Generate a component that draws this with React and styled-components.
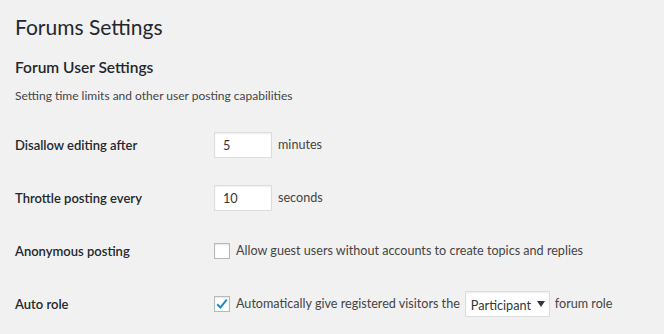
import React from "react";
import styled, { createGlobalStyle } from "styled-components";

const Global = createGlobalStyle`
  html, body { margin: 0; padding: 0; background: #f1f1f1; }
  body { font-family: Lato, "Open Sans", sans-serif; color: #444; font-size: 13px; }
`;

const Wrap = styled.div`
  padding: 12px 15px 0 15px;
`;

const Title = styled.h1`
  margin: 0;
  font-size: 21px;
  line-height: 29px;
  font-weight: 400;
  color: #23282d;
`;

const Section = styled.h2`
  margin: 16px 0 0;
  font-size: 15.5px;
  line-height: 20px;
  font-weight: 600;
  color: #23282d;
`;

const Desc = styled.p`
  margin: 10px 0 0;
  font-size: 12px;
  line-height: 18px;
  color: #444;
`;

const Table = styled.div`
  display: grid;
  grid-template-columns: 199px 1fr;
  grid-auto-rows: 53px;
  margin-top: 13px;
`;

const Label = styled.div`
  display: flex;
  align-items: center;
  font-weight: 600;
  font-size: 13px;
  color: #23282d;
`;

const Field = styled.div`
  display: flex;
  align-items: center;
  gap: 6px;
  font-size: 12.6px;
  color: #444;
`;

const NumInput = styled.input`
  box-sizing: border-box;
  width: 58px;
  height: 26px;
  padding: 3px 8px;
  border: 1px solid #ddd;
  box-shadow: inset 0 1px 2px rgba(0, 0, 0, 0.07);
  background: #fff;
  font-family: inherit;
  font-size: 12.7px;
  color: #32373c;
  outline: none;
`;

const Box = styled.span`
  box-sizing: border-box;
  width: 16px;
  height: 16px;
  border: 1px solid #b4b9be;
  background: #fff;
  box-shadow: inset 0 1px 2px rgba(0, 0, 0, 0.1);
  display: inline-flex;
  align-items: center;
  justify-content: center;
  flex: none;
`;

const SelectWrap = styled.span`
  position: relative;
  display: inline-flex;
  margin: 0 -1px 0 -1px;
`;

const Select = styled.select`
  box-sizing: border-box;
  appearance: none;
  -webkit-appearance: none;
  width: 85px;
  height: 26px;
  padding: 2px 12px 0 5px;
  border: 1px solid #ddd;
  box-shadow: inset 0 1px 2px rgba(0, 0, 0, 0.07);
  background: #fff;
  font-family: inherit;
  font-size: 12.7px;
  color: #32373c;
  border-radius: 0;
  outline: none;
`;

const Arrow = styled.svg`
  position: absolute;
  right: 5px;
  top: 10px;
  pointer-events: none;
`;

function Check({ checked }) {
  return (
    <Box>
      {checked && (
        <svg width="14" height="14" viewBox="0 0 14 14">
          <path d="M2.2 7.2 L5.4 10.4 L11.8 2.6" fill="none" stroke="#1e8cbe" strokeWidth="2" />
        </svg>
      )}
    </Box>
  );
}

export default function App() {
  return (
    <>
      <Global />
      <Wrap>
        <Title>Forums Settings</Title>
        <Section>Forum User Settings</Section>
        <Desc>Setting time limits and other user posting capabilities</Desc>
        <Table>
          <Label>Disallow editing after</Label>
          <Field>
            <NumInput defaultValue="5" />
            <span>minutes</span>
          </Field>
          <Label>Throttle posting every</Label>
          <Field>
            <NumInput defaultValue="10" />
            <span>seconds</span>
          </Field>
          <Label>Anonymous posting</Label>
          <Field>
            <Check />
            <span>Allow guest users without accounts to create topics and replies</span>
          </Field>
          <Label>Auto role</Label>
          <Field>
            <Check checked />
            <span>Automatically give registered visitors the</span>
            <SelectWrap>
              <Select defaultValue="participant">
                <option value="participant">Participant</option>
              </Select>
              <Arrow width="8" height="6" viewBox="0 0 8 6">
                <path d="M0 0 H8 L4 6 Z" fill="#32373c" />
              </Arrow>
            </SelectWrap>
            <span>forum role</span>
          </Field>
        </Table>
      </Wrap>
    </>
  );
}
